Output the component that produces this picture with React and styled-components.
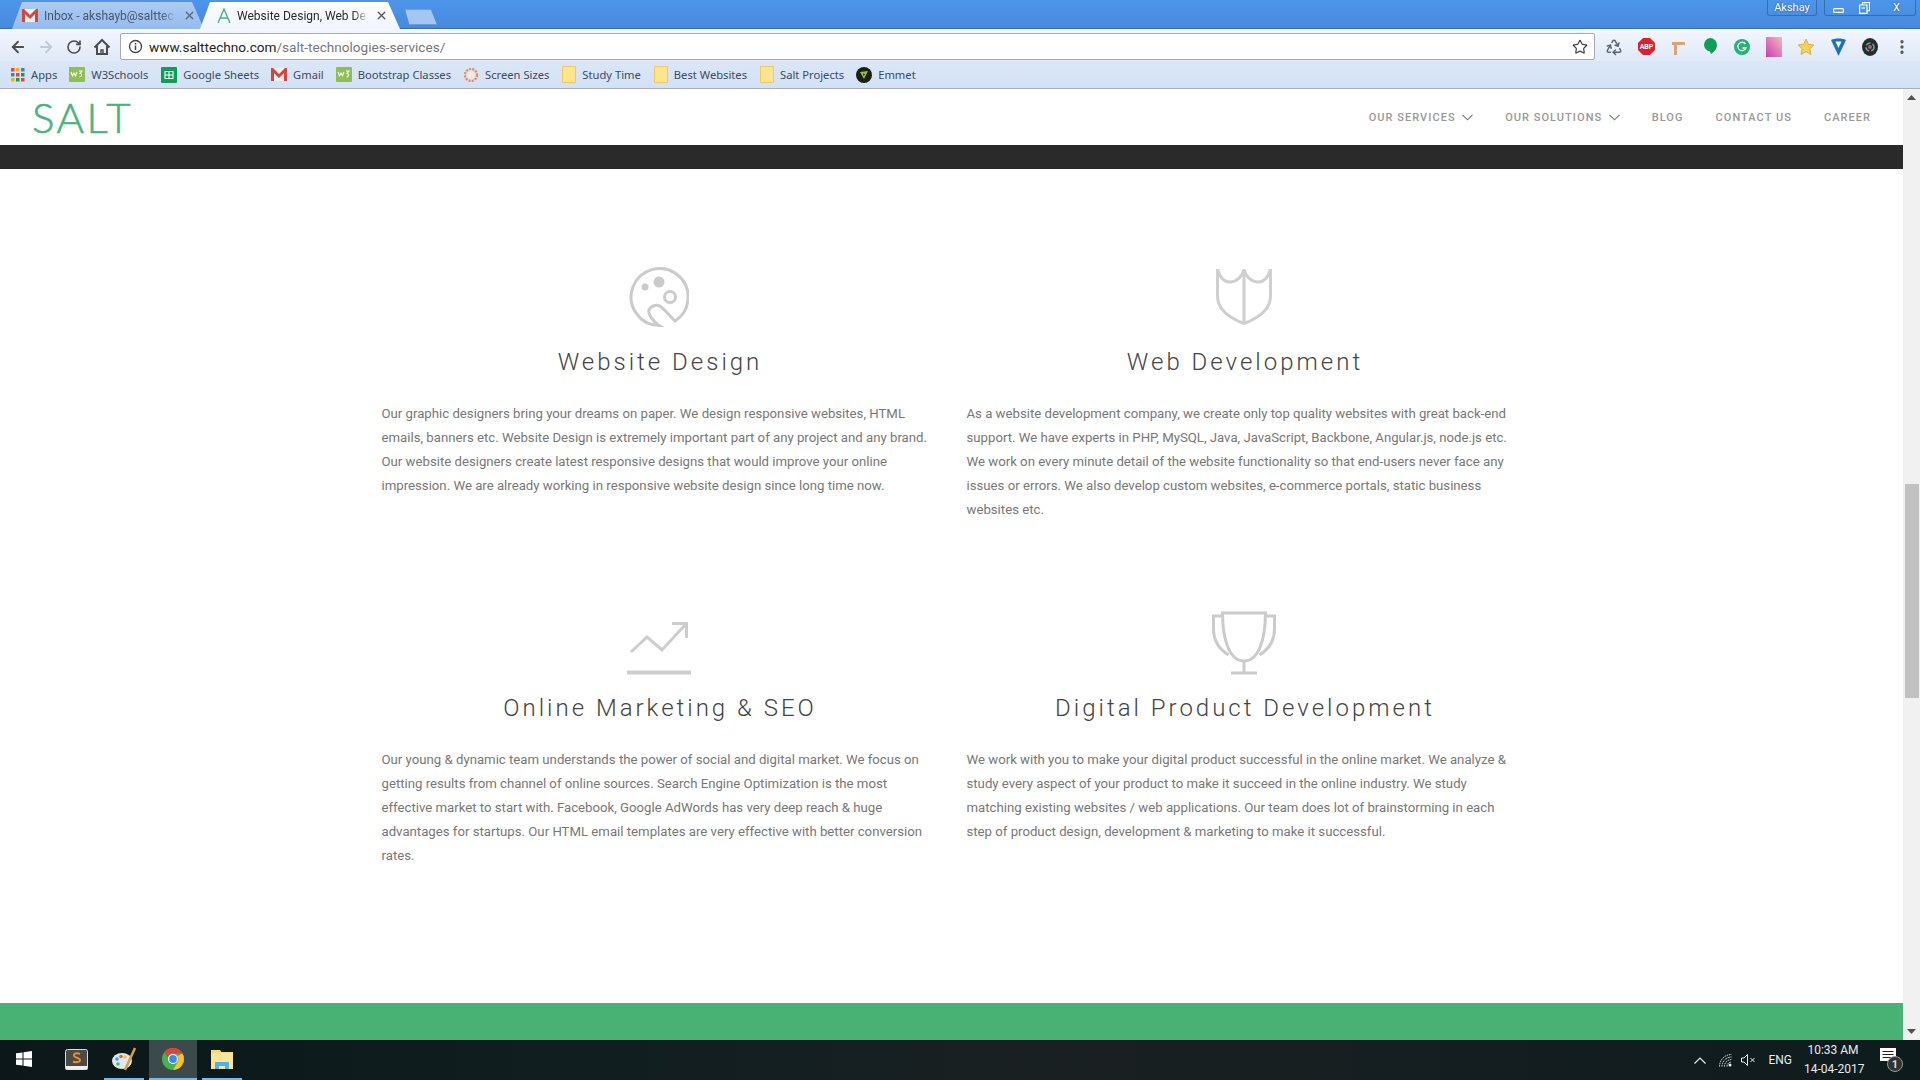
import styled, { createGlobalStyle } from "styled-components";
import { ArrowLeft, ArrowRight, RotateCw, Star, X, MoreVertical, Recycle } from "lucide-react";

const GlobalStyle = createGlobalStyle`
  html, body { margin: 0; padding: 0; height: 100%; overflow: hidden; }
  * { box-sizing: border-box; }
  body { font-family: Roboto, "Liberation Sans", sans-serif; }
`;

const Window = styled.div`
  width: 1920px;
  height: 1080px;
  display: flex;
  flex-direction: column;
  overflow: hidden;
`;

/* browser chrome */
const TabStrip = styled.div`
  height: 29px;
  padding: 2px 4px 0 12px;
  display: flex;
  align-items: flex-start;
  background: linear-gradient(#4d95ea, #4789dd);
  border-bottom: 1px solid #3a6ea8;
`;

const Tab = styled.div`
  width: ${(p) => (p.$active ? 200 : 192)}px;
  height: 27px;
  margin-right: -4px;
  padding: 0 ${(p) => (p.$active ? 12 : 8)}px 0 ${(p) => (p.$active ? 17 : 10)}px;
  display: flex;
  align-items: center;
  gap: 6px;
  font-size: 12px;
  color: ${(p) => (p.$active ? "#2b2b2b" : "#45566e")};
  background: ${(p) => (p.$active ? "linear-gradient(#fdfeff, #f0f5fd)" : "linear-gradient(#adcbf3, #95bbee)")};
  clip-path: polygon(0 100%, 10px 0, calc(100% - 12px) 0, 100% 100%);
`;

const TabTitle = styled.span`
  flex: 1;
  overflow: hidden;
  white-space: nowrap;
  -webkit-mask-image: linear-gradient(90deg, #000 88%, transparent);
  mask-image: linear-gradient(90deg, #000 88%, transparent);
`;

const NewTab = styled.div`
  width: 32px;
  height: 16px;
  margin: 7px 0 0 9px;
  background: #a3c6f2;
  border: 1px solid #6f9bd6;
  clip-path: polygon(0 0, 80% 0, 100% 100%, 14% 100%);
`;

const StripRight = styled.div`
  margin-left: auto;
  margin-top: -2px;
  display: flex;
  gap: 7px;
`;

const ProfileButton = styled.div`
  width: 50px;
  height: 16px;
  display: flex;
  align-items: center;
  justify-content: center;
  font-size: 11px;
  color: #fff;
  text-shadow: 0 0 2px #27466f;
  border: 1px solid #3a6ea8;
  border-top: 0;
  border-radius: 0 0 3px 3px;
`;

const WindowControls = styled.div`
  width: 92px;
  height: 16px;
  display: flex;
  align-items: center;
  border: 1px solid #3a6ea8;
  border-top: 0;
  border-radius: 0 0 3px 3px;
  color: #fff;
`;

const ControlCell = styled.div`
  flex: ${(p) => p.$flex || 1};
  display: flex;
  justify-content: center;
  font-size: 11px;
  line-height: 14px;
  text-shadow: 0 0 2px #27466f;
`;

const Toolbar = styled.div`
  height: 32px;
  padding: 4px 0 0 4px;
  display: flex;
  align-items: flex-start;
  background: linear-gradient(#f3f7fe, #dfe9f7);
`;

const NavIcon = styled.div`
  width: 28px;
  height: 28px;
  display: flex;
  align-items: center;
  justify-content: center;
  color: ${(p) => p.$color || "#4c4c4c"};
`;

const UrlBox = styled.div`
  width: 1475px;
  height: 27px;
  margin-left: 4px;
  padding: 0 6px 0 7px;
  display: flex;
  align-items: center;
  gap: 6px;
  background: #fff;
  border: 1px solid #a5a8ac;
  border-radius: 2px;
`;

const UrlText = styled.div`
  flex: 1;
  font-size: 13.6px;
  color: #222;
  span { color: #777; }
`;

const Extensions = styled.div`
  margin-left: 3px;
  height: 27px;
  display: flex;
  align-items: center;
`;

const ExtensionSlot = styled.div`
  width: 32px;
  display: flex;
  justify-content: center;
`;

const BookmarksBar = styled.div`
  height: 28px;
  padding: 0 0 0 11px;
  display: flex;
  align-items: center;
  background: linear-gradient(#dbe7f7, #d2e1f5);
  border-bottom: 1px solid #a9b0b8;
`;

const Bookmark = styled.div`
  display: flex;
  align-items: center;
  gap: 6px;
  margin-right: ${(p) => p.$gap}px;
  font-family: "Noto Sans", sans-serif;
  font-size: 11.2px;
  color: #3d4a63;
  white-space: nowrap;
`;

/* page */
const Viewport = styled.div`
  flex: 1;
  min-height: 0;
  display: flex;
`;

const Page = styled.main`
  flex: 1;
  min-width: 0;
  display: flex;
  flex-direction: column;
  background: #fff;
`;

const SiteHeader = styled.header`
  height: 56px;
  padding: 0 32px 0 32px;
  display: flex;
  align-items: center;
  justify-content: space-between;
`;

const Logo = styled.div`
  font-family: Lato, sans-serif;
  font-weight: 300;
  font-size: 42px;
  line-height: 44px;
  letter-spacing: 2.5px;
  -webkit-text-stroke: 0.6px #4cb27d;
  color: #4cb27d;
`;

const Nav = styled.nav`
  display: flex;
  align-items: center;
  gap: 32px;
`;

const NavItem = styled.div`
  display: flex;
  align-items: center;
  gap: 6.5px;
  font-size: 11px;
  font-weight: 500;
  letter-spacing: 1.05px;
  color: #999;
`;

const DarkBand = styled.div`
  height: 24px;
  background: #2a2a2a;
`;

const Services = styled.section`
  flex: 1;
  padding-top: 96px;
`;

const ServiceGrid = styled.div`
  width: 1170px;
  margin: 0 auto;
  display: grid;
  grid-template-columns: 1fr 1fr;
  grid-auto-rows: 346px;
`;

const Card = styled.article`
  padding: 0 15px;
  text-align: center;
`;

const IconBox = styled.div`
  height: 64px;
  display: flex;
  align-items: ${(p) => p.$align || "center"};
  justify-content: center;
`;

const CardTitle = styled.h3`
  margin: 18px 0 0;
  padding-left: 2px;
  font-size: 24px;
  line-height: 30px;
  font-weight: 300;
  letter-spacing: 3px;
  color: #444;
`;

const CardText = styled.p`
  margin: 25px 0 0;
  font-size: 13.2px;
  line-height: 24px;
  color: #777;
  text-align: left;
`;

const GreenBand = styled.div`
  height: 37px;
  background: #48b275;
`;

const Scrollbar = styled.aside`
  width: 17px;
  display: flex;
  flex-direction: column;
  background: #f1f1f1;
`;

const ScrollArrow = styled.div`
  height: 17px;
  display: flex;
  align-items: center;
  justify-content: center;
  margin-top: ${(p) => (p.$down ? "auto" : 0)};
`;

const ScrollThumb = styled.div`
  height: 214px;
  margin: 378px 1px 0 2px;
  background: #c1c1c1;
`;

/* taskbar */
const Taskbar = styled.footer`
  height: 40px;
  display: flex;
  align-items: stretch;
  background: linear-gradient(90deg, #0b1719, #101e20 30%, #1a2022 55%, #0e1b1d);
  color: #e8ecec;
`;

const TaskSlot = styled.div`
  width: ${(p) => p.$w}px;
  margin-right: ${(p) => p.$mr || 0}px;
  display: flex;
  align-items: center;
  justify-content: center;
  background: ${(p) => (p.$active ? "#3d4a4b" : "transparent")};
  border-bottom: 2px solid ${(p) => (p.$open ? "#76b9ed" : "transparent")};
`;

const Tray = styled.div`
  margin-left: auto;
  display: flex;
  align-items: center;
  font-size: 12px;
`;

const TrayItem = styled.div`
  margin-right: ${(p) => p.$mr}px;
  display: flex;
  align-items: center;
`;

const Clock = styled.div`
  width: 58px;
  margin-right: 18px;
  text-align: center;
  font-size: 12px;
  line-height: 19px;
  white-space: nowrap;
`;

const GmailIcon = () => (
  <svg width="16" height="13" viewBox="0 0 16 13">
    <rect width="16" height="13" fill="#eee" />
    <path d="M0 13V0h2l6 6 6-6h2v13h-3V5L8 10 3 5v8z" fill="#d3473a" />
  </svg>
);

const SaltIcon = () => (
  <svg width="14" height="15" viewBox="0 0 14 15" fill="none" stroke="#4cb27d" strokeWidth="1.4">
    <path d="M1 15 7 1l6 14M3.500 10h7" />
  </svg>
);

const HomeIcon = () => (
  <svg width="18" height="18" viewBox="0 0 18 18" fill="none" stroke="#4c4c4c" strokeWidth="2">
    <path d="M1.500 9.500 9 2l7.500 7.500M4 8v8h10V8" />
    <path d="M8 16v-4h2v4" strokeWidth="1.400" />
  </svg>
);

const InfoIcon = () => (
  <svg width="15" height="15" viewBox="0 0 15 15" fill="none" stroke="#444" strokeWidth="1.300">
    <circle cx="7.500" cy="7.500" r="6" />
    <path d="M7.500 6.500v4.500M7.500 4v1.500" strokeWidth="1.500" />
  </svg>
);

const AppsIcon = () => {
  const colors = ["#e8453c", "#f4b400", "#3d7ee6", "#3d7ee6", "#e8453c", "#0f9d58", "#f4b400", "#0f9d58", "#e8453c"];
  return (
    <svg width="14" height="14" viewBox="0 0 14 14">
      {colors.map((c, i) => (
        <rect key={i} x={(i % 3) * 5} y={Math.floor(i / 3) * 5} width="3.500" height="3.500" fill={c} />
      ))}
    </svg>
  );
};

const W3Icon = () => (
  <svg width="16" height="15" viewBox="0 0 16 15">
    <rect width="16" height="15" rx="1" fill="#8cc152" />
    <path d="M2 5l1.500 4L5 6l1.500 3L8 5M10 4h3l-2 2.500c2 0 2.500 3-.5 3.500" fill="none" stroke="#fff" strokeWidth="1.100" />
  </svg>
);

const SheetsIcon = () => (
  <svg width="16" height="16" viewBox="0 0 16 16">
    <rect width="16" height="16" rx="1" fill="#0f9d58" />
    <path d="M4 4.500h8v7H4zM4 8h8M8 4.500v7" fill="none" stroke="#fff" strokeWidth="1.100" />
  </svg>
);

const ScreenIcon = () => (
  <svg width="16" height="16" viewBox="0 0 16 16" fill="none">
    <circle cx="8" cy="8" r="6" stroke="#e8845c" strokeWidth="2.200" strokeDasharray="2 1.200" />
    <circle cx="8" cy="8" r="3.600" fill="#fbe7dc" />
  </svg>
);

const NoteIcon = () => (
  <svg width="14" height="17" viewBox="0 0 14 17">
    <path d="M.5.500h13v16H.5z" fill="#fde48f" stroke="#edc96a" />
  </svg>
);

const EmmetIcon = () => (
  <svg width="16" height="16" viewBox="0 0 16 16">
    <circle cx="8" cy="8" r="8" fill="#1b1f1b" />
    <path d="M4 5l8-1-4 8zM7 6.500l2 .5-1.500 2z" fill="#8ec23f" fillRule="evenodd" />
  </svg>
);

const AbpIcon = () => (
  <svg width="17" height="17" viewBox="0 0 17 17">
    <path d="M5 0h7l5 5v7l-5 5H5l-5-5V5z" fill="#d8232a" />
    <text x="8.500" y="11" textAnchor="middle" fontSize="7" fontWeight="700" fontFamily="Roboto, sans-serif" fill="#fff">ABP</text>
  </svg>
);

const SignIcon = () => (
  <svg width="16" height="16" viewBox="0 0 16 16">
    <path d="M2 3h13v3H7v10H4V6H2z" fill="#d9a577" />
  </svg>
);

const HangoutIcon = () => (
  <svg width="14" height="18" viewBox="0 0 14 18">
    <path d="M7 0a7 7 0 0 1 7 7c0 4-3 7-6 9l-1-2.500A6.800 6.800 0 0 1 7 0z" fill="#0f9d58" />
  </svg>
);

const GrammarlyIcon = () => (
  <svg width="16" height="16" viewBox="0 0 16 16">
    <circle cx="8" cy="8" r="8" fill="#1fb573" />
    <path d="M11.500 5A4.200 4.200 0 1 0 12 9H8.500" fill="none" stroke="#fff" strokeWidth="1.300" />
  </svg>
);

const GradientSquare = () => (
  <svg width="16" height="20" viewBox="0 0 16 20">
    <defs>
      <linearGradient id="pinkGrad" x1="1" y1="0" x2="0" y2="1">
        <stop offset="0" stopColor="#f9b8b8" />
        <stop offset="1" stopColor="#c83fb4" />
      </linearGradient>
    </defs>
    <rect width="16" height="20" fill="url(#pinkGrad)" />
  </svg>
);

const GoldStar = () => (
  <svg width="18" height="18" viewBox="0 0 18 18">
    <path d="M9 1l2.400 5.400 5.600.6-4.200 3.900 1.200 5.600L9 13.700l-5 2.800 1.200-5.600L1 7l5.600-.6z" fill="#f6d256" stroke="#d9b04a" />
  </svg>
);

const VeeIcon = () => (
  <svg width="15" height="18" viewBox="0 0 15 18">
    <path d="M0 2c4-2 11-2 15 0l-7.500 16z" fill="#1f6fbf" />
    <path d="M4.500 3.500h6L7.500 10z" fill="#fff" />
  </svg>
);

const LensIcon = () => (
  <svg width="16" height="18" viewBox="0 0 16 18" fill="none">
    <ellipse cx="8" cy="9" rx="8" ry="9" fill="#2a2a2a" />
    <circle cx="8" cy="9" r="4" stroke="#3fb8a0" strokeWidth="1.500" strokeDasharray="5 2" />
    <circle cx="8" cy="9" r="2" fill="#d8458a" />
  </svg>
);

const NavChevron = () => (
  <svg width="11" height="7" viewBox="0 0 11 7" fill="none" stroke="#777" strokeWidth="1.100">
    <path d="M.5.800 5.500 5.800l5-5" />
  </svg>
);

const MinimizeGlyph = () => (
  <svg width="11" height="5" viewBox="0 0 11 5" fill="none" stroke="#fff" strokeWidth="1.200" style={{ marginTop: 6 }}>
    <rect x=".6" y=".6" width="9.800" height="3.800" rx="1" />
  </svg>
);

const RestoreGlyph = () => (
  <svg width="11" height="12" viewBox="0 0 11 12" fill="none" stroke="#fff" strokeWidth="1.200" style={{ marginTop: 1 }}>
    <path d="M3.500 3V.6h7v8H8M.6 3h7.400v8.400H.6z" />
    <path d="M2.500 6h3.500" />
  </svg>
);

const PaletteArt = () => (
  <svg width="60" height="60" viewBox="0 0 60 60" fill="none" stroke="#cbcbcb" strokeWidth="3">
    <path d="M46 54 33 40.500c-4-4-11-2-13 2.500-1.500 4 4.500 12 10 15.500A28.500 28.500 0 1 1 46 54z" />
    <circle cx="16" cy="20" r="3.500" fill="#cbcbcb" stroke="none" />
    <circle cx="30" cy="15" r="5.500" fill="#cbcbcb" stroke="none" />
    <circle cx="41" cy="30" r="5.500" />
  </svg>
);

const ShieldArt = () => (
  <svg width="56" height="56" viewBox="0 0 56 56" fill="none" stroke="#cfcfcf" strokeWidth="3">
    <path d="M1.500 0C4 9 9 13 14 13c6 0 12-5 14-12 2 7 8 12 14 12 5 0 10-4 12.500-13v27c0 15-14.500 23-26.500 27.500C16 50 1.500 42 1.500 27z" />
    <path d="M28 1v53" />
  </svg>
);

const ChartArt = () => (
  <svg width="64" height="54" viewBox="0 0 64 54" fill="none" stroke="#cdcdcd">
    <path d="M0 51.500h64" strokeWidth="4" />
    <path d="M4 31 20 16l15 13L58 4" strokeWidth="3" />
    <path d="M45 2.500h14.500V17" strokeWidth="3" />
  </svg>
);

const TrophyArt = () => (
  <svg width="64" height="64" viewBox="0 0 64 64" fill="none" stroke="#cbcbcb" strokeWidth="3">
    <path d="M9 2h46" />
    <path d="M10.500 2c0 24 6 48 21.500 48S53.500 26 53.500 2" />
    <path d="M9 5H1.500v13c0 13 7 21 15 26" />
    <path d="M55 5h7.500v13c0 13-7 21-15 26" />
    <path d="M32 50v12" />
    <path d="M19 62h26" />
  </svg>
);

const WindowsLogo = () => (
  <svg width="16" height="16" viewBox="0 0 16 16" fill="#fff">
    <path d="M0 2.300 6.500 1.400V7.500H0zM7.500 1.300 16 0V7.500H7.500zM0 8.500H6.500V14.600L0 13.700zM7.500 8.500H16V16L7.500 14.700z" />
  </svg>
);

const SublimeIcon = () => (
  <svg width="23" height="21" viewBox="0 0 23 21">
    <rect x="0.500" y="0.500" width="22" height="20" rx="2" fill="#4a4a46" stroke="#ddd" />
    <rect x="0.500" y="17" width="22" height="3.500" fill="#f0f0f0" />
    <path d="M15 5c-3-1.500-7-.5-6 2 .8 2 6 1.500 6 4 0 2-4 3-7 1.500" fill="none" stroke="#f08a24" strokeWidth="2" />
  </svg>
);

const PaintIcon = () => (
  <svg width="25" height="24" viewBox="0 0 25 24">
    <ellipse cx="10" cy="14" rx="10" ry="8" fill="#dfe8ee" />
    <circle cx="5" cy="12" r="1.800" fill="#3f9be0" />
    <circle cx="9" cy="9.500" r="1.800" fill="#e85a4f" />
    <circle cx="13" cy="10" r="1.800" fill="#f6c343" />
    <circle cx="6" cy="17" r="1.800" fill="#5cb85c" />
    <path d="M23 1 13 23" stroke="#d99a4a" strokeWidth="2.500" />
  </svg>
);

const ChromeIcon = () => (
  <svg width="22" height="22" viewBox="0 0 22 22">
    <circle cx="11" cy="11" r="11" fill="#4caf50" />
    <path d="M11 0a11 11 0 0 1 9.500 5.500H11A5.500 5.500 0 0 0 5.800 9.200L2.400 4.200A11 11 0 0 1 11 0z" fill="#db4437" />
    <path d="M20.500 5.500A11 11 0 0 1 11 22l4.800-8.200A5.500 5.500 0 0 0 15.500 8z" fill="#fbc02d" />
    <circle cx="11" cy="11" r="5" fill="#fff" />
    <circle cx="11" cy="11" r="3.900" fill="#4285f4" />
  </svg>
);

const FolderIcon = () => (
  <svg width="22" height="20" viewBox="0 0 22 20">
    <path d="M0 1h9l1.500 2H22v17H0z" fill="#f8d775" />
    <path d="M0 4h22v16H0z" fill="#fbe39a" />
    <path d="M4 20v-7h14v7h-4v-3H8v3z" fill="#4fb3e8" />
  </svg>
);

const WifiIcon = () => (
  <svg width="13" height="13" viewBox="0 0 13 13" fill="none" stroke="#e8ecec">
    <path d="M.5 12.500a12 12 0 0 1 12-12M3 12.500a9.500 9.500 0 0 1 9.500-9.500M5.500 12.500a7 7 0 0 1 7-7M8 12.500a4.500 4.500 0 0 1 4.500-4.500" strokeDasharray="1.500 .8" />
    <circle cx="11" cy="11" r="1.500" fill="#e8ecec" stroke="none" />
  </svg>
);

const MutedIcon = () => (
  <svg width="15" height="12" viewBox="0 0 15 12" fill="none" stroke="#e8ecec">
    <path d="M.5 4v4h2.500L6.500 11.500V.5L3 4z" />
    <path d="M9.500 4l4 4M13.500 4l-4 4" />
  </svg>
);

const NotificationIcon = () => (
  <svg width="24" height="25" viewBox="0 0 24 25">
    <path d="M0 0h16v13h-5l-3 3v-3H0z" fill="#fff" />
    <path d="M2.500 3.500h11M2.500 6.500h11M2.500 9.500h11" stroke="#222" />
    <circle cx="15" cy="16" r="7.500" fill="#333" stroke="#999" />
    <text x="15" y="20" textAnchor="middle" fontSize="11" fontFamily="Roboto, sans-serif" fontWeight="700" fill="#ddd">1</text>
  </svg>
);

const extensions = [
  <Recycle key="recycle" size={18} color="#5a6672" />,
  <AbpIcon key="abp" />,
  <SignIcon key="sign" />,
  <HangoutIcon key="hangout" />,
  <GrammarlyIcon key="grammarly" />,
  <GradientSquare key="gradient" />,
  <GoldStar key="star" />,
  <VeeIcon key="vee" />,
  <LensIcon key="lens" />,
  <MoreVertical key="more" size={18} strokeWidth={2.4} color="#555" />,
];

const bookmarks = [
  { label: "Apps", icon: <AppsIcon />, gap: 12 },
  { label: "W3Schools", icon: <W3Icon />, gap: 13 },
  { label: "Google Sheets", icon: <SheetsIcon />, gap: 12 },
  { label: "Gmail", icon: <GmailIcon />, gap: 12 },
  { label: "Bootstrap Classes", icon: <W3Icon />, gap: 12 },
  { label: "Screen Sizes", icon: <ScreenIcon />, gap: 13 },
  { label: "Study Time", icon: <NoteIcon />, gap: 13 },
  { label: "Best Websites", icon: <NoteIcon />, gap: 13 },
  { label: "Salt Projects", icon: <NoteIcon />, gap: 12 },
  { label: "Emmet", icon: <EmmetIcon />, gap: 0 },
];

const services = [
  {
    title: "Website Design",
    art: <PaletteArt />,
    text: "Our graphic designers bring your dreams on paper. We design responsive websites, HTML emails, banners etc. Website Design is extremely important part of any project and any brand. Our website designers create latest responsive designs that would improve your online impression. We are already working in responsive website design since long time now.",
  },
  {
    title: "Web Development",
    art: <ShieldArt />,
    text: "As a website development company, we create only top quality websites with great back-end support. We have experts in PHP, MySQL, Java, JavaScript, Backbone, Angular.js, node.js etc. We work on every minute detail of the website functionality so that end-users never face any issues or errors. We also develop custom websites, e-commerce portals, static business websites etc.",
  },
  {
    title: "Online Marketing & SEO",
    art: <ChartArt />,
    align: "flex-end",
    text: "Our young & dynamic team understands the power of social and digital market. We focus on getting results from channel of online sources. Search Engine Optimization is the most effective market to start with. Facebook, Google AdWords has very deep reach & huge advantages for startups. Our HTML email templates are very effective with better conversion rates.",
  },
  {
    title: "Digital Product Development",
    art: <TrophyArt />,
    align: "flex-end",
    text: "We work with you to make your digital product successful in the online market. We analyze & study every aspect of your product to make it succeed in the online industry. We study matching existing websites / web applications. Our team does lot of brainstorming in each step of product design, development & marketing to make it successful.",
  },
];

export default function App() {
  return (
    <Window>
      <GlobalStyle />
      <TabStrip>
        <Tab>
          <GmailIcon />
          <TabTitle>Inbox - akshayb@salttec</TabTitle>
          <X size={13} strokeWidth={2.5} color="#5a6a80" />
        </Tab>
        <Tab $active>
          <SaltIcon />
          <TabTitle>Website Design, Web De</TabTitle>
          <X size={13} strokeWidth={2.5} color="#555" />
        </Tab>
        <NewTab />
        <StripRight>
          <ProfileButton>Akshay</ProfileButton>
          <WindowControls>
            <ControlCell><MinimizeGlyph /></ControlCell>
            <ControlCell><RestoreGlyph /></ControlCell>
            <ControlCell $flex={1.4}>X</ControlCell>
          </WindowControls>
        </StripRight>
      </TabStrip>

      <Toolbar>
        <NavIcon><ArrowLeft size={18} strokeWidth={2.4} /></NavIcon>
        <NavIcon $color="#c4c9d0"><ArrowRight size={18} strokeWidth={2.4} /></NavIcon>
        <NavIcon><RotateCw size={16} strokeWidth={2.4} /></NavIcon>
        <NavIcon><HomeIcon /></NavIcon>
        <UrlBox>
          <InfoIcon />
          <UrlText>www.salttechno.com<span>/salt-technologies-services/</span></UrlText>
          <Star size={16} strokeWidth={1.8} color="#444" />
        </UrlBox>
        <Extensions>
          {extensions.map((icon) => (
            <ExtensionSlot key={icon.key}>{icon}</ExtensionSlot>
          ))}
        </Extensions>
      </Toolbar>

      <BookmarksBar>
        {bookmarks.map((b) => (
          <Bookmark key={b.label} $gap={b.gap}>
            {b.icon}
            {b.label}
          </Bookmark>
        ))}
      </BookmarksBar>

      <Viewport>
        <Page>
          <SiteHeader>
            <Logo>SALT</Logo>
            <Nav>
              <NavItem>OUR SERVICES <NavChevron /></NavItem>
              <NavItem>OUR SOLUTIONS <NavChevron /></NavItem>
              <NavItem>BLOG</NavItem>
              <NavItem>CONTACT US</NavItem>
              <NavItem>CAREER</NavItem>
            </Nav>
          </SiteHeader>
          <DarkBand />
          <Services>
            <ServiceGrid>
              {services.map((s) => (
                <Card key={s.title}>
                  <IconBox $align={s.align}>{s.art}</IconBox>
                  <CardTitle>{s.title}</CardTitle>
                  <CardText>{s.text}</CardText>
                </Card>
              ))}
            </ServiceGrid>
          </Services>
          <GreenBand />
        </Page>
        <Scrollbar>
          <ScrollArrow>
            <svg width="9" height="5" viewBox="0 0 9 5"><path d="M4.500 0 9 5H0z" fill="#505050" /></svg>
          </ScrollArrow>
          <ScrollThumb />
          <ScrollArrow $down>
            <svg width="9" height="5" viewBox="0 0 9 5"><path d="M4.500 5 9 0H0z" fill="#505050" /></svg>
          </ScrollArrow>
        </Scrollbar>
      </Viewport>

      <Taskbar>
        <TaskSlot $w={48} $mr={0}><WindowsLogo /></TaskSlot>
        <TaskSlot $w={56}><SublimeIcon /></TaskSlot>
        <TaskSlot $w={40} $mr={5} $open><PaintIcon /></TaskSlot>
        <TaskSlot $w={48} $mr={5} $active $open><ChromeIcon /></TaskSlot>
        <TaskSlot $w={40} $open><FolderIcon /></TaskSlot>
        <Tray>
          <TrayItem $mr={13}>
            <svg width="12" height="7" viewBox="0 0 12 7" fill="none" stroke="#e8ecec" strokeWidth="1.200"><path d="M.5 6.500 6 1l5.500 5.500" /></svg>
          </TrayItem>
          <TrayItem $mr={9}><WifiIcon /></TrayItem>
          <TrayItem $mr={12}><MutedIcon /></TrayItem>
          <TrayItem $mr={12}>ENG</TrayItem>
          <Clock>10:33 AM<br />14-04-2017</Clock>
          <TrayItem $mr={16}><NotificationIcon /></TrayItem>
        </Tray>
      </Taskbar>
    </Window>
  );
}
